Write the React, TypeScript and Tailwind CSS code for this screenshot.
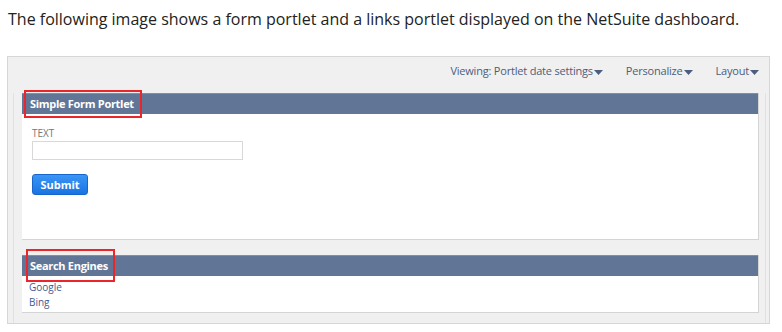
import React from "react";

function Caret() {
  return (
    <svg width="9" height="5" viewBox="0 0 9 5" className="ml-[1px] mt-[3px]">
      <path d="M0 0 L9 0 L4.5 5 Z" fill="#4d5d7e" />
    </svg>
  );
}

export default function App() {
  return (
    <div className="w-[782px] h-[332px] bg-white" style={{ fontFamily: '"Open Sans", sans-serif' }}>
      <p className="pl-[8px] pt-[9px] text-[16px] leading-[20px] text-[#222] whitespace-nowrap">
        The following image shows a form portlet and a links portlet displayed on the NetSuite dashboard.
      </p>
      <div className="ml-[7px] mt-[27px] w-[763px] h-[268px] border border-[#d6d6d6] bg-[#f0f0f0] flex flex-col">
        <div className="h-[36px] flex items-start justify-end pt-[6px] pr-[10px] text-[11px] leading-[16px] tracking-[-0.2px] text-[#4d5d7e]">
          <span className="flex items-center">Viewing: Portlet date settings<Caret /></span>
          <span className="flex items-center ml-[23px]">Personalize<Caret /></span>
          <span className="flex items-center ml-[23px]">Layout<Caret /></span>
        </div>
        <div className="ml-[5px] mr-[3px] flex-1 border-l border-r border-[#e2e2e2] pl-[8px] pr-[6px] flex flex-col">
          <div className="relative border-b border-r border-[#d4d4d4] bg-white">
            <div className="h-[21px] bg-[#617697] border-t border-[#7d8fac] flex items-center pl-[8px] text-[11px] font-bold tracking-[-0.3px] text-white">
              Simple Form Portlet
            </div>
            <div className="absolute left-[2px] top-[-3px] w-[118px] h-[28px] border-2 border-[#e8262b]" />
            <div className="h-[125px] pl-[10px] pt-[13px]">
              <div className="text-[10px] leading-[12px] text-[#777]">TEXT</div>
              <div className="mt-[2px] w-[211px] h-[19px] border border-[#d8d8d8] bg-white" />
              <button className="block mt-[14px] w-[56px] h-[21px] rounded-[3px] border border-[#1866c9] bg-gradient-to-b from-[#3a95f5] to-[#1874e4] text-white text-[11px] font-bold leading-[18px]">
                Submit
              </button>
            </div>
          </div>
          <div className="relative mt-[15px] border-b border-r border-[#d4d4d4] bg-white">
            <div className="h-[21px] bg-[#617697] border-t border-[#7d8fac] flex items-center pl-[8px] text-[11px] font-bold tracking-[-0.3px] text-white">
              Search Engines
            </div>
            <div className="absolute left-[4px] top-[-6px] w-[89px] h-[33px] border-2 border-[#e8262b]" />
            <div className="h-[36px] pl-[7px] pt-[4px] text-[10px] leading-[15px] text-[#3f5b94]">
              <div>Google</div>
              <div>Bing</div>
            </div>
          </div>
        </div>
      </div>
    </div>
  );
}
